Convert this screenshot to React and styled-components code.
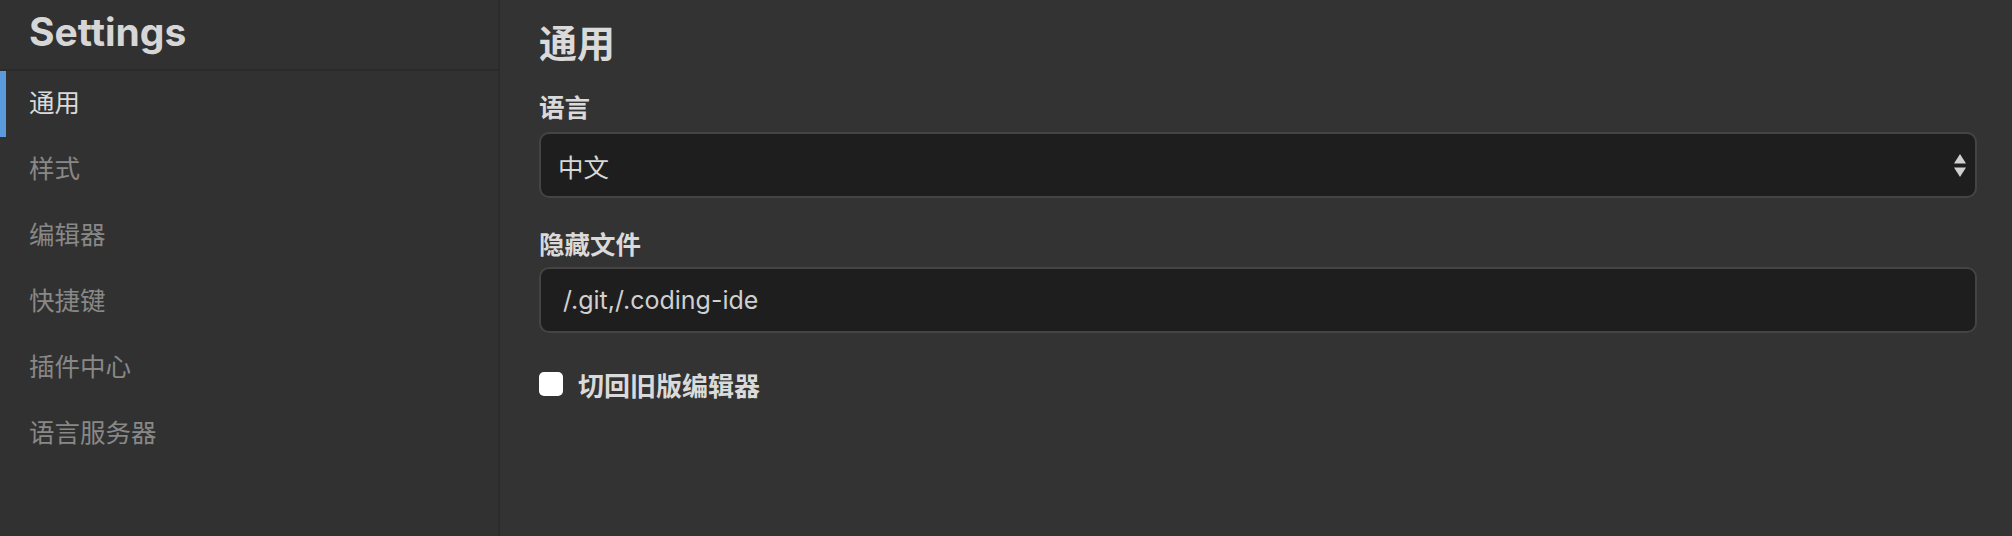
import React from "react";
import styled, { createGlobalStyle } from "styled-components";

const Global = createGlobalStyle`
  html, body { margin: 0; padding: 0; height: 100%; background: #333333; }
  #root { height: 100%; }
  * { box-sizing: border-box; }
  body {
    font-family: Inter, "Noto Sans CJK SC", sans-serif;
    -webkit-font-smoothing: antialiased;
  }
`;

const Layout = styled.div`
  display: flex;
  width: 2012px;
  height: 536px;
  background: #333333;
  overflow: hidden;
`;

const Sidebar = styled.aside`
  width: 500px;
  flex: none;
  display: flex;
  flex-direction: column;
  background: #313131;
  border-right: 2px solid #2b2b2b;
`;

const SidebarHeader = styled.div`
  height: 71px;
  padding: 8px 0 0 29px;
  border-bottom: 2px solid #2b2b2b;
  font-size: 39px;
  font-weight: 700;
  line-height: 48px;
  color: #d6d6d6;
`;

const NavList = styled.nav`
  display: flex;
  flex-direction: column;
`;

const NavItem = styled.div`
  height: 66px;
  display: flex;
  align-items: center;
  padding: 0 0 7px 23px;
  font-size: 25.5px;
  color: ${(p) => (p.$active ? "#dadada" : "#888888")};
  border-left: 6px solid ${(p) => (p.$active ? "#5b9bdd" : "transparent")};
`;

const Main = styled.main`
  flex: 1;
  padding: 19px 35px 0 39px;
  display: flex;
  flex-direction: column;
`;

const Title = styled.h1`
  margin: 0 0 25px 0;
  font-size: 38px;
  line-height: 48px;
  font-weight: 700;
  color: #dadada;
`;

const Field = styled.div`
  display: flex;
  flex-direction: column;
  margin-bottom: ${(p) => p.$gap || 0}px;
`;

const Label = styled.label`
  font-size: 25.5px;
  line-height: 32px;
  font-weight: 600;
  color: #dadada;
  margin-bottom: ${(p) => p.$space || 8}px;
`;

const SelectBox = styled.div`
  height: 66px;
  display: flex;
  align-items: center;
  justify-content: space-between;
  padding: 0 9px 0 17px;
  background: #1e1e1e;
  border: 2px solid #444444;
  border-radius: 10px;
  font-size: 25.5px;
  color: #d8d8d8;
`;

const TextInput = styled.input`
  height: 66px;
  width: 100%;
  padding: 0 0 0 22px;
  background: #1e1e1e;
  border: 2px solid #444444;
  border-radius: 10px;
  font-family: Inter, "Noto Sans CJK SC", sans-serif;
  font-size: 25px;
  color: #d0d0d0;
  outline: none;
`;

const CheckRow = styled.label`
  display: flex;
  align-items: center;
  gap: 15px;
  margin-top: 35px;
  height: 32px;
  font-size: 26px;
  font-weight: 600;
  color: #dadada;
`;

const Check = styled.input`
  appearance: none;
  -webkit-appearance: none;
  width: 24px;
  height: 24px;
  margin: 0;
  background: #ffffff;
  border-radius: 5px;
  flex: none;
`;

const Arrows = () => (
  <svg width="12" height="23" viewBox="0 0 12 23" aria-hidden="true">
    <path d="M6 0 L12 9.5 L0 9.5 Z" fill="#d0d0d0" />
    <path d="M0 13.5 L12 13.5 L6 23 Z" fill="#d0d0d0" />
  </svg>
);

const navItems = ["通用", "样式", "编辑器", "快捷键", "插件中心", "语言服务器"];

export default function App() {
  return (
    <>
      <Global />
      <Layout>
        <Sidebar>
          <SidebarHeader>Settings</SidebarHeader>
          <NavList>
            {navItems.map((t, i) => (
              <NavItem key={t} $active={i === 0}>
                {t}
              </NavItem>
            ))}
          </NavList>
        </Sidebar>
        <Main>
          <Title>通用</Title>
          <Field $gap={31}>
            <Label>语言</Label>
            <SelectBox>
              <span>中文</span>
              <Arrows />
            </SelectBox>
          </Field>
          <Field>
            <Label $space={6}>隐藏文件</Label>
            <TextInput readOnly value="/.git,/.coding-ide" />
          </Field>
          <CheckRow>
            <Check type="checkbox" />
            <span>切回旧版编辑器</span>
          </CheckRow>
        </Main>
      </Layout>
    </>
  );
}
